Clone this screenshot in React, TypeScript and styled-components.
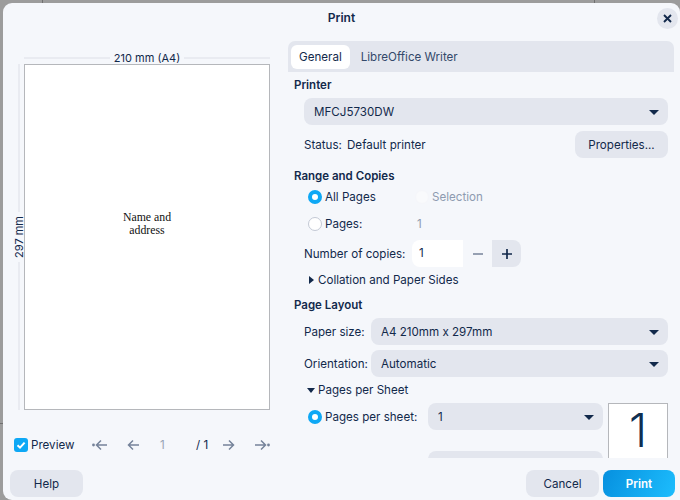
import React from 'react';
import styled, { createGlobalStyle } from 'styled-components';

const ink = '#12294b';
const soft = '#e3e6ee';
const accent = '#0ea8f5';

const Global = createGlobalStyle`
  html, body {
    margin: 0;
    height: 100%;
    overflow: hidden;
    background: #9c9c9c;
  }
  * { box-sizing: border-box; }
`;

const Backdrop = styled.div`
  width: 680px;
  height: 500px;
  padding: 3px 0 0 3px;
  font-family: Inter, "Liberation Sans", sans-serif;
  font-size: 11.6px;
  color: ${ink};
  background:
    linear-gradient(#707070, #707070) 42px 0 / 1px 3px no-repeat,
    linear-gradient(#707070, #707070) 594px 0 / 1px 3px no-repeat,
    linear-gradient(#707070, #707070) 0 423px / 3px 1px no-repeat;
`;

const Dialog = styled.div`
  height: 497px;
  display: flex;
  flex-direction: column;
  background: #f5f7fb;
  border-radius: 9px 9px 0 9px;
  overflow: hidden;
`;

const TitleBar = styled.header`
  height: 38px;
  flex: none;
  display: grid;
  grid-template-columns: 1fr auto 1fr;
  align-items: start;
`;

const Title = styled.h1`
  grid-column: 2;
  margin: 7px 0 0;
  font-size: 12px;
  line-height: 15px;
  font-weight: 600;
`;

const CloseButton = styled.button`
  grid-column: 3;
  justify-self: end;
  width: 21px;
  height: 21px;
  margin: 5px 2px 0 0;
  padding: 0;
  border: 0;
  border-radius: 50%;
  background: ${soft};
  color: ${ink};
  display: flex;
  align-items: center;
  justify-content: center;
`;

const Body = styled.div`
  height: 417px;
  flex: none;
  display: flex;
`;

const PreviewPane = styled.section`
  width: 285px;
  flex: none;
  padding: 11px 0 0 11px;
  display: flex;
  flex-direction: column;
`;

const RulerGrid = styled.div`
  display: grid;
  grid-template-columns: 10px 246px;
  grid-template-rows: 12px 346px;
`;

const TopRuler = styled.div`
  grid-column: 2;
  display: flex;
  align-items: center;
  gap: 4px;
  font-size: 11px;
  line-height: 12px;
  white-space: nowrap;
  &::before, &::after {
    content: '';
    flex: 1;
    height: 2px;
    background: #e9ebf1;
  }
`;

const SideRuler = styled.div`
  grid-row: 2;
  display: flex;
  flex-direction: column;
  align-items: center;
  gap: 4px;
  width: 10px;
  font-size: 11px;
  line-height: 12px;
  &::before, &::after {
    content: '';
    flex: 1;
    width: 2px;
    background: #e9ebf1;
  }
`;

const SideLabel = styled.span`
  writing-mode: vertical-rl;
  transform: rotate(180deg);
  white-space: nowrap;
`;

const Sheet = styled.div`
  grid-row: 2;
  grid-column: 2;
  background: #fff;
  border: 1px solid #b5b7bb;
  display: flex;
  align-items: center;
  justify-content: center;
  padding-bottom: 26px;
`;

const SheetText = styled.div`
  font-family: "Liberation Serif", serif;
  font-size: 11.8px;
  line-height: 13px;
  text-align: center;
  color: #111;
`;

const PreviewBar = styled.div`
  height: 22px;
  margin-top: 24px;
  display: flex;
  align-items: center;
`;

const CheckBox = styled.span`
  width: 14px;
  height: 14px;
  border-radius: 3px;
  background: ${accent};
  display: flex;
  align-items: center;
  justify-content: center;
  color: #fff;
  flex: none;
`;

const PreviewLabel = styled.span`
  margin-left: 3px;
  width: 61px;
`;

const PagerIcon = styled.svg<{ $gap: number }>`
  width: 16px;
  height: 14px;
  margin-left: ${p => p.$gap}px;
  flex: none;
  color: #76839a;
`;

const PagerNumber = styled.span<{ $muted?: boolean; $width: number; $pad: number }>`
  width: ${p => p.$width}px;
  padding-left: ${p => p.$pad}px;
  flex: none;
  white-space: nowrap;
  margin-top: -1px;
  color: ${p => (p.$muted ? '#98a3b5' : ink)};
`;

const Options = styled.section`
  flex: 1;
  min-width: 0;
  overflow: hidden;
  padding-right: 6px;
`;

const TabStrip = styled.div`
  width: 386px;
  height: 31px;
  background: ${soft};
  border-radius: 7px 7px 0 0;
  padding: 4px 3px;
  display: flex;
  align-items: flex-start;
`;

const Tab = styled.div<{ $active?: boolean }>`
  height: 24px;
  line-height: 24px;
  padding: 0 8px;
  border-radius: 6px;
  background: ${p => (p.$active ? '#fff' : 'transparent')};
  color: ${p => (p.$active ? ink : '#34496a')};
  margin-right: ${p => (p.$active ? '3px' : 0)};
`;

const GroupTitle = styled.h2<{ $top: number }>`
  margin: ${p => p.$top}px 0 0 6px;
  font-size: 11.5px;
  line-height: 14px;
  font-weight: 600;
`;

const Indented = styled.div`
  margin-left: 16px;
  width: 364px;
`;

const Row = styled.div<{ $top?: number }>`
  display: flex;
  align-items: center;
  margin-top: ${p => p.$top ?? 0}px;
  height: 27px;
`;

const Select = styled.div<{ $width?: number }>`
  height: 27px;
  flex: ${p => (p.$width ? 'none' : 1)};
  width: ${p => (p.$width ? `${p.$width}px` : 'auto')};
  background: ${soft};
  border-radius: 8px;
  padding: 0 10px;
  display: flex;
  align-items: center;
  justify-content: space-between;
`;

const Caret = styled.span`
  width: 0;
  height: 0;
  border-left: 5px solid transparent;
  border-right: 5px solid transparent;
  border-top: 5px solid ${ink};
  margin-top: 1px;
  margin-right: -1px;
`;

const FieldLabel = styled.span<{ $width?: number }>`
  width: ${p => (p.$width ? `${p.$width}px` : 'auto')};
  flex: none;
  white-space: nowrap;
`;

const PlainButton = styled.button<{ $width: number }>`
  width: ${p => p.$width}px;
  height: 27px;
  padding: 0;
  border: 0;
  border-radius: 8px;
  background: ${soft};
  color: ${ink};
  font: inherit;
`;

const PrimaryButton = styled(PlainButton)`
  background: linear-gradient(115deg, #0690df, #1dbdfd);
  color: #fff;
  font-weight: 600;
`;

const RadioRow = styled.div`
  display: flex;
  align-items: center;
  height: 27px;
  margin-left: 20px;
`;

const Radio = styled.span<{ $checked?: boolean; $faint?: boolean }>`
  width: 14px;
  height: 14px;
  flex: none;
  border-radius: 50%;
  margin-right: 3px;
  background: ${p => (p.$faint ? '#f9fafc' : '#fff')};
  border: ${p =>
    p.$checked
      ? `4px solid ${accent}`
      : p.$faint
        ? '1px solid #f5f6fa'
        : '1px solid #c3c9d5'};
`;

const Muted = styled.span`
  color: #8e9bb0;
`;

const Stretch = styled.div`
  flex: 1;
`;

const Spin = styled.div`
  width: 51px;
  height: 27px;
  background: #fff;
  border-radius: 8px 0 0 8px;
  padding-left: 7px;
  line-height: 27px;
  flex: none;
`;

const SpinMinus = styled.span`
  width: 29px;
  color: #76839a;
  display: flex;
  justify-content: center;
  flex: none;
`;

const SpinPlus = styled.span`
  width: 29px;
  height: 27px;
  background: ${soft};
  border-radius: 0 8px 8px 0;
  display: flex;
  align-items: center;
  justify-content: center;
  flex: none;
`;

const Disclosure = styled.div<{ $top: number }>`
  display: flex;
  align-items: center;
  height: 14px;
  margin: ${p => p.$top}px 0 0 21px;
  gap: 4px;
`;

const TriangleRight = styled.span`
  width: 0;
  height: 0;
  border-top: 4.5px solid transparent;
  border-bottom: 4.5px solid transparent;
  border-left: 5px solid ${ink};
`;

const TriangleDown = styled.span`
  width: 0;
  height: 0;
  margin-left: -2px;
  margin-right: -1px;
  border-left: 4.5px solid transparent;
  border-right: 4.5px solid transparent;
  border-top: 5px solid ${ink};
`;

const SheetGrid = styled.div`
  margin: 6px 0 0 20px;
  width: 360px;
  height: 70px;
  display: flex;
`;

const SheetFields = styled.div`
  width: 295px;
  flex: none;
`;

const LowerSelect = styled(Select)`
  margin: 21px 0 0 120px;
  width: 175px;
`;

const LayoutThumb = styled.div`
  width: 60px;
  height: 62px;
  margin-left: 5px;
  flex: none;
  background: #fff;
  border: 1px solid #b5b7bb;
  display: flex;
  justify-content: center;
  font-size: 46px;
  line-height: 52px;
  font-weight: 300;
  color: #0f2f52;
`;

const Footer = styled.footer`
  flex: 1;
  display: flex;
  align-items: flex-start;
  padding: 12px 5px 0 7px;
`;

const PrintButton = styled(PrimaryButton)`
  margin-left: 4px;
`;

function PagerArrow({ dir, dot, gap }: { dir: 'left' | 'right'; dot?: boolean; gap: number }) {
  const d = dir === 'left' ? 'M15 7H5M9 2.5 4.5 7 9 11.5' : 'M1 7h10M7 2.5 11.5 7 7 11.5';
  return (
    <PagerIcon $gap={gap} viewBox="0 0 16 14" fill="none" stroke="currentColor" strokeWidth="1.5">
      <path d={d} />
      {dot && <circle cx={dir === 'left' ? 1.5 : 14.5} cy="7" r="1.4" fill="currentColor" stroke="none" />}
    </PagerIcon>
  );
}

export default function App() {
  return (
    <Backdrop>
      <Global />
      <Dialog>
        <TitleBar>
          <Title>Print</Title>
          <CloseButton aria-label="Close">
            <svg width="9" height="9" viewBox="0 0 9 9" stroke="currentColor" strokeWidth="1.9" fill="none">
              <path d="M1 1l7 7M8 1 1 8" />
            </svg>
          </CloseButton>
        </TitleBar>
        <Body>
          <PreviewPane>
            <RulerGrid>
              <TopRuler>210 mm (A4)</TopRuler>
              <SideRuler>
                <SideLabel>297 mm</SideLabel>
              </SideRuler>
              <Sheet>
                <SheetText>
                  Name and
                  <br />
                  address
                </SheetText>
              </Sheet>
            </RulerGrid>
            <PreviewBar>
              <CheckBox>
                <svg width="10" height="10" viewBox="0 0 10 10" fill="none" stroke="currentColor" strokeWidth="2">
                  <path d="M1.5 5.2 4 7.6 8.6 2.6" />
                </svg>
              </CheckBox>
              <PreviewLabel>Preview</PreviewLabel>
              <PagerArrow dir="left" dot gap={0} />
              <PagerArrow dir="left" gap={16} />
              <PagerNumber $muted $width={56} $pad={20}>1</PagerNumber>
              <PagerNumber $width={26} $pad={0}>/ 1</PagerNumber>
              <PagerArrow dir="right" gap={0} />
              <PagerArrow dir="right" dot gap={16} />
            </PreviewBar>
          </PreviewPane>
          <Options>
            <TabStrip>
              <Tab $active>General</Tab>
              <Tab>LibreOffice Writer</Tab>
            </TabStrip>
            <GroupTitle $top={6}>Printer</GroupTitle>
            <Indented>
              <Row $top={6}>
                <Select>
                  MFCJ5730DW
                  <Caret />
                </Select>
              </Row>
              <Row $top={6}>
                <FieldLabel $width={43}>Status:</FieldLabel>
                <FieldLabel>Default printer</FieldLabel>
                <Stretch />
                <PlainButton $width={93}>Properties...</PlainButton>
              </Row>
            </Indented>
            <GroupTitle $top={11}>Range and Copies</GroupTitle>
            <RadioRow>
              <Radio $checked />
              <FieldLabel $width={90}>All Pages</FieldLabel>
              <Radio $faint />
              <Muted>Selection</Muted>
            </RadioRow>
            <RadioRow>
              <Radio />
              <FieldLabel $width={92}>Pages:</FieldLabel>
              <Muted>1</Muted>
            </RadioRow>
            <Indented>
              <Row $top={3}>
                <FieldLabel $width={108}>Number of copies:</FieldLabel>
                <Spin>1</Spin>
                <SpinMinus>
                  <svg width="10" height="10" viewBox="0 0 10 10" stroke="currentColor" strokeWidth="1.5">
                    <path d="M0 5h10" />
                  </svg>
                </SpinMinus>
                <SpinPlus>
                  <svg width="10" height="10" viewBox="0 0 10 10" stroke="currentColor" strokeWidth="1.7">
                    <path d="M0 5h10M5 0v10" />
                  </svg>
                </SpinPlus>
              </Row>
            </Indented>
            <Disclosure $top={6}>
              <TriangleRight />
              Collation and Paper Sides
            </Disclosure>
            <GroupTitle $top={11}>Page Layout</GroupTitle>
            <Indented>
              <Row $top={6}>
                <FieldLabel $width={67}>Paper size:</FieldLabel>
                <Select>
                  A4 210mm x 297mm
                  <Caret />
                </Select>
              </Row>
              <Row $top={5}>
                <FieldLabel $width={67}>Orientation:</FieldLabel>
                <Select>
                  Automatic
                  <Caret />
                </Select>
              </Row>
            </Indented>
            <Disclosure $top={6}>
              <TriangleDown />
              Pages per Sheet
            </Disclosure>
            <SheetGrid>
              <SheetFields>
                <Row>
                  <Radio $checked />
                  <FieldLabel $width={103}>Pages per sheet:</FieldLabel>
                  <Select $width={175}>
                    1
                    <Caret />
                  </Select>
                </Row>
                <LowerSelect />
              </SheetFields>
              <LayoutThumb>1</LayoutThumb>
            </SheetGrid>
          </Options>
        </Body>
        <Footer>
          <PlainButton $width={73}>Help</PlainButton>
          <Stretch />
          <PlainButton $width={73}>Cancel</PlainButton>
          <PrintButton $width={72}>Print</PrintButton>
        </Footer>
      </Dialog>
    </Backdrop>
  );
}
